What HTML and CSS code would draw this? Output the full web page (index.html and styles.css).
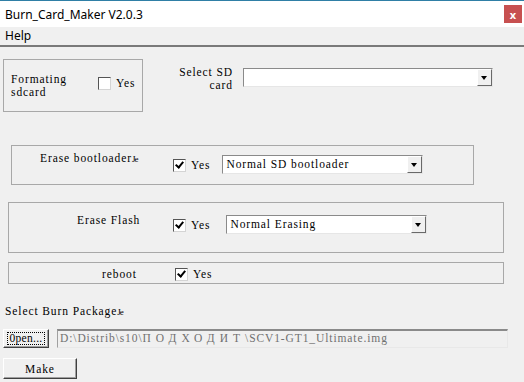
FILE: index.html
```html
<!DOCTYPE html>
<html lang="en">
<head>
    <meta charset="UTF-8">
    <title>Burn_Card_Maker V2.0.3</title>
    <link rel="stylesheet" href="styles.css">
</head>
<body>

    <div class="titlebar">
        <span class="title">Burn_Card_Maker V2.0.3</span>
        <span class="close">x</span>
    </div>
    <div class="menubar"><span class="menu-item">Help</span></div>

    <div class="main">

        <div class="row-top">
            <div class="group group-format">
                <div class="format-label">Formating<br>sdcard</div>
                <span class="check"></span>
                <span class="yes">Yes</span>
            </div>
            <div class="sd-label">Select SD<br>card</div>
            <div class="combo combo-sd"><span class="combo-text"></span><span class="combo-btn"></span></div>
        </div>

        <div class="group group-boot">
            <div class="boot-label">Erase bootloader<span class="junk">Je</span></div>
            <span class="check checked"></span>
            <span class="yes">Yes</span>
            <div class="combo combo-boot"><span class="combo-text">Normal SD bootloader</span><span class="combo-btn"></span></div>
        </div>

        <div class="group group-flash">
            <div class="flash-label">Erase Flash</div>
            <span class="check checked"></span>
            <span class="yes">Yes</span>
            <div class="combo combo-flash"><span class="combo-text">Normal Erasing</span><span class="combo-btn"></span></div>
        </div>

        <div class="group group-reboot">
            <div class="reboot-label">reboot</div>
            <span class="check checked"></span>
            <span class="yes">Yes</span>
        </div>

        <div class="pkg-label">Select Burn Package<span class="junk">Je</span></div>

        <div class="row-open">
            <button class="btn btn-open"><span class="focus">0pen...</span></button>
            <div class="path">D:\Distrib\s10\<span class="wide">ПОДХОДИТ</span>\SCV1-GT1_Ultimate.img</div>
        </div>

        <button class="btn btn-make">Make</button>
    </div>

</body>
</html>
```

FILE: styles.css
```css
body {
    margin: 0;
    background-color: #f0f0f0;
    font-family: "Liberation Serif", "DejaVu Serif", serif;
    font-size: 11.5px;
    letter-spacing: 0.9px;
    color: #000;
    overflow: hidden;
}

.titlebar {
    height: 26px;
    background: #fff;
    border-top: 1px solid #2f7fa6;
    display: flex;
    align-items: center;
    justify-content: space-between;
    font-family: "Noto Sans", sans-serif;
    font-size: 12px;
    letter-spacing: 0;
}
.title {
    margin-left: 5px;
}
.close {
    width: 18px;
    height: 18px;
    margin-right: 2px;
    background: #c75050;
    color: #fff;
    font-size: 11px;
    font-weight: bold;
    display: flex;
    align-items: center;
    justify-content: center;
}

.menubar {
    height: 18px;
    border-bottom: 2px solid #7a7a7a;
    font-family: "Noto Sans", sans-serif;
    font-size: 12px;
    letter-spacing: 0;
    line-height: 17px;
}
.menu-item {
    margin-left: 5px;
}

.main {
    padding-top: 12px;
}

.group {
    border: 1px solid #a8a8a8;
    box-sizing: border-box;
    display: flex;
    align-items: flex-start;
}

.check {
    width: 13px;
    height: 13px;
    box-sizing: border-box;
    background: #fff;
    border: 1px solid #555;
    border-right-color: #d4d4d4;
    border-bottom-color: #d4d4d4;
    position: relative;
}
.check.checked::after {
    content: "";
    position: absolute;
    left: 3px;
    top: 0px;
    width: 3px;
    height: 6px;
    border-right: 2px solid #000;
    border-bottom: 2px solid #000;
    transform: rotate(40deg);
}
.yes {
    margin-left: 5px;
    line-height: 13px;
}

/* top row */
.row-top {
    display: flex;
    align-items: flex-start;
}
.group-format {
    margin-left: 3px;
    width: 140px;
    height: 53px;
    padding-left: 7px;
}
.format-label {
    width: 87px;
    margin-top: 13px;
    line-height: 13px;
}
.group-format .check {
    margin-top: 17px;
}
.group-format .yes {
    margin-top: 17px;
}
.sd-label {
    width: 58px;
    margin-left: 32px;
    margin-top: 7px;
    text-align: right;
    line-height: 13px;
}

.combo {
    height: 19px;
    box-sizing: border-box;
    background: #fff;
    border: 1px solid #8a8a8a;
    border-right-color: #e6e6e6;
    border-bottom-color: #e6e6e6;
    display: flex;
    align-items: stretch;
}
.combo-text {
    flex: 1;
    padding-left: 3px;
    line-height: 17px;
}
.combo-btn {
    width: 15px;
    background: #f0f0f0;
    border: 1px solid #fff;
    border-right-color: #696969;
    border-bottom-color: #696969;
    box-sizing: border-box;
    position: relative;
}
.combo-btn::after {
    content: "";
    position: absolute;
    left: 3px;
    top: 6px;
    border-left: 3.5px solid transparent;
    border-right: 3.5px solid transparent;
    border-top: 4px solid #000;
}
.combo-sd {
    width: 250px;
    margin-left: 10px;
    margin-top: 9px;
}

/* erase bootloader */
.group-boot {
    margin: 33px 0 0 11px;
    width: 463px;
    height: 40px;
    padding-left: 28px;
}
.boot-label {
    width: 133px;
    margin-top: 6px;
    line-height: 12px;
}
.junk {
    font-size: 9px;
    letter-spacing: -1px;
}
.group-boot .check {
    margin-top: 13px;
}
.group-boot .yes {
    margin-top: 13px;
}
.combo-boot {
    width: 201px;
    margin-left: 12px;
    margin-top: 9px;
}

/* erase flash */
.group-flash {
    margin: 17px 0 0 8px;
    width: 496px;
    height: 51px;
    padding-left: 68px;
}
.flash-label {
    width: 96px;
    margin-top: 11px;
    line-height: 12px;
}
.group-flash .check {
    margin-top: 16px;
}
.group-flash .yes {
    margin-top: 16px;
}
.combo-flash {
    width: 201px;
    margin-left: 16px;
    margin-top: 12px;
}

/* reboot */
.group-reboot {
    margin: 9px 0 0 8px;
    width: 496px;
    height: 22px;
    padding-left: 93px;
}
.reboot-label {
    width: 73px;
    margin-top: 5px;
    line-height: 12px;
}
.group-reboot .check {
    margin-top: 5px;
}
.group-reboot .yes {
    margin-top: 5px;
}

.pkg-label {
    margin: 21px 0 0 5px;
    line-height: 12px;
}

.row-open {
    display: flex;
    align-items: flex-start;
    margin-top: 11px;
}

.btn {
    font-family: inherit;
    font-size: 11.5px;
    letter-spacing: 0.9px;
    background: #f0f0f0;
    box-sizing: border-box;
    border: 1px solid #fff;
    border-right-color: #404040;
    border-bottom-color: #404040;
    box-shadow: inset -1px -1px 0 #a0a0a0;
    padding: 0;
    color: #000;
}
.btn-open {
    margin-left: 3px;
    width: 46px;
    height: 19px;
    display: flex;
    align-items: center;
    justify-content: center;
}
.focus {
    border: 1px dotted #000;
    padding: 0 1px;
    line-height: 11px;
    letter-spacing: 0.3px;
}
.path {
    margin-left: 8px;
    width: 451px;
    height: 19px;
    box-sizing: border-box;
    border: 1px solid #a0a0a0;
    border-top: 2px solid #8a8a8a;
    border-right-color: #e8e8e8;
    border-bottom-color: #e8e8e8;
    color: #707070;
    padding-left: 2px;
    line-height: 15px;
    white-space: nowrap;
    overflow: hidden;
}
.wide {
    letter-spacing: 5px;
}
.btn-make {
    display: block;
    margin: 10px 0 0 3px;
    width: 74px;
    height: 21px;
}
```
